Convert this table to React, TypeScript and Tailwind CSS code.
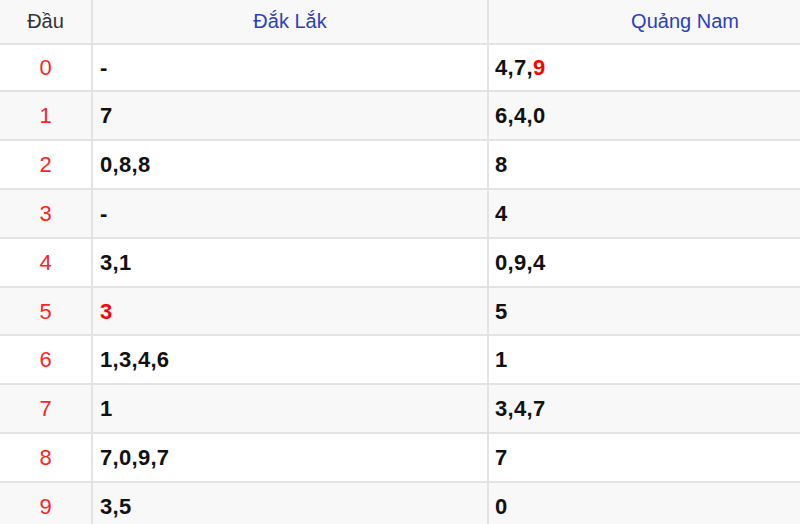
import React from 'react';

type Cell = { text: string; red?: boolean }[];

const rows: { dau: string; dl: Cell; qn: Cell }[] = [
  { dau: '0', dl: [{ text: '-' }], qn: [{ text: '4,7,' }, { text: '9', red: true }] },
  { dau: '1', dl: [{ text: '7' }], qn: [{ text: '6,4,0' }] },
  { dau: '2', dl: [{ text: '0,8,8' }], qn: [{ text: '8' }] },
  { dau: '3', dl: [{ text: '-' }], qn: [{ text: '4' }] },
  { dau: '4', dl: [{ text: '3,1' }], qn: [{ text: '0,9,4' }] },
  { dau: '5', dl: [{ text: '3', red: true }], qn: [{ text: '5' }] },
  { dau: '6', dl: [{ text: '1,3,4,6' }], qn: [{ text: '1' }] },
  { dau: '7', dl: [{ text: '1' }], qn: [{ text: '3,4,7' }] },
  { dau: '8', dl: [{ text: '7,0,9,7' }], qn: [{ text: '7' }] },
  { dau: '9', dl: [{ text: '3,5' }], qn: [{ text: '0' }] },
];

const Numbers = ({ cell }: { cell: Cell }) => (
  <span className="text-[22px] font-bold tracking-[0.3px] text-[#111]">
    {cell.map((part, i) => (
      <span key={i} className={part.red ? 'text-[#ff0000]' : ''}>
        {part.text}
      </span>
    ))}
  </span>
);

export default function App() {
  return (
    <div
      className="w-[800px] h-[524px] overflow-hidden bg-white"
      style={{ fontFamily: '"Liberation Sans", Arial, sans-serif' }}
    >
      {/* header - the last column runs past the right edge of the view */}
      <div className="flex h-[45px] w-[881px] border-b-2 border-[#e3e3e3] bg-[#f8f8f8] text-[20px]">
        <div className="flex w-[93px] items-center justify-center border-r-2 border-[#e3e3e3] pb-[2px] text-[#333]">
          Đầu
        </div>
        <div className="flex w-[396px] items-center justify-center border-r-2 border-[#e3e3e3] pb-[2px] text-[#2b3fbf]">
          Đắk Lắk
        </div>
        <div className="flex flex-1 items-center justify-center pb-[2px] text-[#2b3fbf]">Quảng Nam</div>
      </div>

      {/* rows */}
      {rows.map((row, i) => (
        <div
          key={row.dau}
          className={`flex w-[881px] border-b-2 border-[#e3e3e3] ${i === 0 ? 'h-[47px]' : 'h-[48.9px]'} ${
            i % 2 === 1 ? 'bg-[#f8f8f8]' : 'bg-white'
          }`}
        >
          <div className="flex w-[93px] items-center justify-center border-r-2 border-[#e3e3e3] text-[22px] text-[#f22]">
            {row.dau}
          </div>
          <div className="flex w-[396px] items-center border-r-2 border-[#e3e3e3] pl-[7px]">
            <Numbers cell={row.dl} />
          </div>
          <div className="flex flex-1 items-center pl-[6px]">
            <Numbers cell={row.qn} />
          </div>
        </div>
      ))}
    </div>
  );
}
